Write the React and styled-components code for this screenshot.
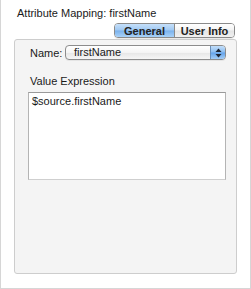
import React from 'react';
import styled, { createGlobalStyle } from 'styled-components';

const GlobalStyle = createGlobalStyle`
  html, body {
    margin: 0;
    padding: 0;
    background: #ffffff;
  }
  * {
    box-sizing: border-box;
  }
`;

const Window = styled.div`
  width: 251px;
  height: 289px;
  background: #ffffff;
  border-left: 1px solid #d6d6d6;
  border-right: 1px solid #d6d6d6;
  border-bottom: 1px solid #d6d6d6;
  font-family: "Lucida Grande", "Liberation Sans", Arial, sans-serif;
  font-size: 11px;
  color: #1a1a1a;
  display: flex;
  flex-direction: column;
`;

const Title = styled.div`
  padding: 6px 0 0 16px;
  height: 23px;
  line-height: 14px;
`;

const TabRow = styled.div`
  display: flex;
  justify-content: flex-end;
  padding-right: 15px;
  height: 15px;
  position: relative;
  z-index: 1;
`;

const Segmented = styled.div`
  display: flex;
  height: 15px;
  border: 1px solid #8a8a8a;
  border-radius: 4px;
  overflow: hidden;
  box-shadow: 0 1px 0 rgba(0, 0, 0, 0.08);
`;

const Segment = styled.div`
  width: ${p => p.$w}px;
  display: flex;
  align-items: center;
  justify-content: center;
  font-weight: bold;
  font-size: 11px;
  color: #222;
  border-left: ${p => (p.$first ? 'none' : '1px solid #8a8a8a')};
  background: ${p =>
    p.$active
      ? 'linear-gradient(#c6e0fa 0%, #9fc8f2 48%, #7ab1ec 52%, #a9d2f8 100%)'
      : 'linear-gradient(#ffffff 0%, #f3f3f3 48%, #e4e4e4 52%, #f1f1f1 100%)'};
`;

const Panel = styled.div`
  margin: 1px 13px 0 13px;
  height: 235px;
  background: #f4f4f4;
  border: 1px solid #cdcdcd;
  border-radius: 3px;
  padding: 5px 10px 0 13px;
  display: flex;
  flex-direction: column;
`;

const FieldRow = styled.div`
  display: flex;
  align-items: center;
  height: 15px;
`;

const Label = styled.div`
  width: 37px;
  padding-left: 2px;
`;

const Popup = styled.div`
  flex: 1;
  height: 15px;
  display: flex;
  border: 1px solid #8c8c8c;
  border-radius: 4px;
  overflow: hidden;
  background: linear-gradient(#ffffff 0%, #f4f4f4 50%, #e6e6e6 51%, #f6f6f6 100%);
  box-shadow: 0 1px 0 rgba(0, 0, 0, 0.06);
`;

const PopupValue = styled.div`
  flex: 1;
  padding-left: 8px;
  line-height: 13px;
  font-size: 11px;
`;

const PopupArrows = styled.div`
  width: 15px;
  display: flex;
  align-items: center;
  justify-content: center;
  background: linear-gradient(#c2defa 0%, #8cbdf0 48%, #62a2ea 52%, #a4cdf6 100%);
  border-left: 1px solid #6b8fb8;
`;

const SectionLabel = styled.div`
  margin-top: 14px;
  padding-left: 2px;
  line-height: 14px;
`;

const TextBox = styled.div`
  margin-top: 4px;
  height: 88px;
  background: #ffffff;
  border: 1px solid #9a9a9a;
  border-bottom-color: #cfcfcf;
  border-left-color: #b4b4b4;
  border-right-color: #b4b4b4;
  padding: 1px 0 0 3px;
  line-height: 14px;
`;

function Arrows() {
  return (
    <svg width="7" height="10" viewBox="0 0 7 10">
      <path d="M3.5 0.5 L6.5 4 L0.5 4 Z" fill="#1e2430" />
      <path d="M3.5 9.5 L6.5 6 L0.5 6 Z" fill="#1e2430" />
    </svg>
  );
}

export default function App() {
  return (
    <>
      <GlobalStyle />
      <Window>
        <Title>Attribute Mapping: firstName</Title>
        <TabRow>
          <Segmented>
            <Segment $w={59} $first $active>General</Segment>
            <Segment $w={60}>User Info</Segment>
          </Segmented>
        </TabRow>
        <Panel>
          <FieldRow>
            <Label>Name:</Label>
            <Popup>
              <PopupValue>firstName</PopupValue>
              <PopupArrows>
                <Arrows />
              </PopupArrows>
            </Popup>
          </FieldRow>
          <SectionLabel>Value Expression</SectionLabel>
          <TextBox>$source.firstName</TextBox>
        </Panel>
      </Window>
    </>
  );
}
